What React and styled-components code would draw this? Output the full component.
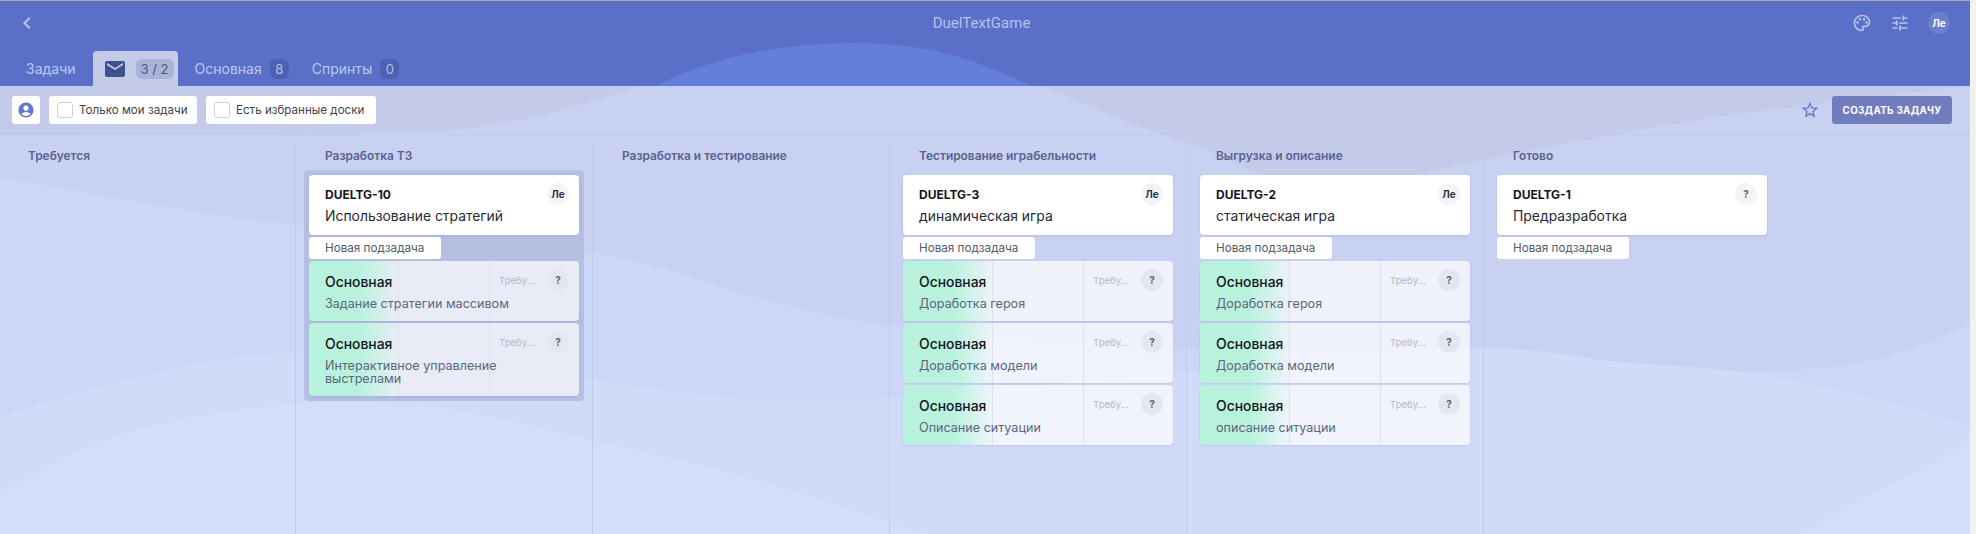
import React from "react";
import styled, { createGlobalStyle } from "styled-components";
import { MdAccountCircle, MdChevronLeft, MdMail, MdOutlinePalette, MdStarBorder, MdTune } from "react-icons/md";

const GlobalStyle = createGlobalStyle`
  html, body {
    margin: 0;
    height: 100%;
    overflow: hidden;
    background: #f1f1f1;
    font-family: Inter, "Liberation Sans", sans-serif;
  }
`;

const Page = styled.div`
  position: relative;
  width: 1970px;
  height: 534px;
  box-sizing: border-box;
  border-top: 1px solid #a9a9a9;
  overflow: hidden;
  background: linear-gradient(#5a6fc8 85px, #c4cbea 85px);
`;

const Waves = styled.svg`
  position: absolute;
  top: -1px;
  left: 0;
`;

const Content = styled.div`
  position: relative;
  display: flex;
  flex-direction: column;
  height: 100%;
`;

const Header = styled.header`
  height: 85px;
  flex: none;
  display: flex;
  flex-direction: column;
`;

const TopRow = styled.div`
  height: 50px;
  padding: 0 20px 6px 15px;
  box-sizing: border-box;
  display: flex;
  align-items: center;
  color: #b9c5ee;
`;

const Title = styled.div`
  flex: 1;
  padding-left: 72px;
  text-align: center;
  font-family: Roboto, sans-serif;
  font-size: 15px;
  color: #b5c1ec;
`;

const HeaderIcons = styled.div`
  display: flex;
  align-items: center;
  gap: 18px;
`;

const HeaderAvatar = styled.div`
  width: 22px;
  height: 22px;
  border-radius: 50%;
  background: #6b7fcf;
  color: #fff;
  font-size: 10px;
  font-weight: 700;
  display: flex;
  align-items: center;
  justify-content: center;
`;

const Tabs = styled.nav`
  height: 35px;
  padding-left: 26px;
  display: flex;
  align-items: center;
`;

const Tab = styled.div`
  display: flex;
  align-items: center;
  gap: 8px;
  font-size: 14px;
  color: #bcc8ef;
  margin-right: 23px;
`;

const ActiveTab = styled.div`
  width: 85px;
  height: 35px;
  margin: 0 17px 0 -6px;
  box-sizing: border-box;
  padding-left: 10px;
  display: flex;
  align-items: center;
  gap: 9px;
  background: #c3cbe9;
  border-radius: 4px 4px 0 0;
  color: #3e5090;
`;

const Count = styled.span`
  min-width: 19px;
  height: 20px;
  padding: 0 ${(p) => (p.$wide ? 5 : 0)}px;
  box-sizing: border-box;
  border-radius: 6px;
  font-size: 13px;
  line-height: 20px;
  text-align: center;
  background: ${(p) => (p.$wide ? "#aab3d5" : "#4e60b2")};
  color: ${(p) => (p.$wide ? "#4a5382" : "#b4c1ec")};
  white-space: nowrap;
`;

const Toolbar = styled.div`
  height: 49px;
  flex: none;
  box-sizing: border-box;
  padding: 10px 18px 10px 12px;
  border-bottom: 1px solid #bfc8ea;
  display: flex;
  align-items: flex-start;
  gap: 9px;
`;

const FilterButton = styled.div`
  width: ${(p) => p.$width}px;
  height: 28px;
  box-sizing: border-box;
  padding-left: 8px;
  background: #fff;
  border-radius: 3px;
  display: flex;
  align-items: center;
  gap: 6px;
  font-size: 11.6px;
  color: #444;
`;

const UserButton = styled(FilterButton)`
  padding: 0;
  justify-content: center;
  color: #5f7ac2;
`;

const CheckBox = styled.span`
  width: 16px;
  height: 16px;
  box-sizing: border-box;
  border: 1px solid #cfd0d6;
  border-radius: 3px;
`;

const StarButton = styled.div`
  margin-left: auto;
  margin-right: 3px;
  height: 28px;
  display: flex;
  align-items: center;
  color: #5f7ac2;
`;

const CreateButton = styled.div`
  width: 120px;
  height: 28px;
  background: #727dbd;
  border-radius: 3px;
  color: #fff;
  font-size: 9.8px;
  font-weight: 700;
  letter-spacing: 0.3px;
  display: flex;
  align-items: center;
  justify-content: center;
`;

const Board = styled.main`
  flex: 1;
  display: flex;
  min-height: 0;
`;

const Column = styled.section`
  width: 297px;
  flex: none;
  box-sizing: border-box;
  margin-top: 9px;
  border-right: 1px solid #bfc9ec;
  &:first-child {
    width: 296px;
  }
  &:last-child {
    border-right: none;
  }
`;

const ColumnTitle = styled.h3`
  margin: 0 0 2px;
  padding-left: 29px;
  font-size: 11.9px;
  font-weight: 600;
  line-height: 24px;
  color: #5a618f;
  ${Column}:first-child & {
    padding-left: 28px;
  }
`;

const Stack = styled.div`
  width: 280px;
  box-sizing: border-box;
  margin-left: 8px;
  padding: 5px;
  border-radius: 4px;
  display: flex;
  flex-direction: column;
  gap: 2px;
  background: ${(p) => (p.$selected ? "#b5bfe2" : "transparent")};
`;

const Card = styled.div`
  height: 60px;
  box-sizing: border-box;
  padding: 8px 10px 0 16px;
  background: #fff;
  border-radius: 4px;
  box-shadow: 0 1px 3px rgba(100, 110, 180, 0.2);
`;

const CardTop = styled.div`
  height: 22px;
  display: flex;
  align-items: center;
  justify-content: space-between;
`;

const TaskId = styled.span`
  font-size: 12px;
  font-weight: 700;
  color: #14141c;
`;

const CardTitle = styled.div`
  margin-top: 2px;
  font-size: 13.9px;
  line-height: 18px;
  color: #2a2a38;
`;

const Assignee = styled.span`
  width: 22px;
  height: 22px;
  flex: none;
  border-radius: 50%;
  background: ${(p) => (p.$sub ? "#e4e7f2" : "#f3f4f7")};
  color: ${(p) => (p.$me ? "#30303c" : "#5d6272")};
  font-size: 10px;
  font-weight: 700;
  display: flex;
  align-items: center;
  justify-content: center;
`;

const NewSubtask = styled.div`
  width: 132px;
  height: 22px;
  box-sizing: border-box;
  padding-left: 16px;
  background: #fff;
  border-radius: 3px;
  font-size: 11.7px;
  line-height: 22px;
  color: #565a66;
`;

const SubCard = styled.div`
  box-sizing: border-box;
  padding: 8px 10px 11px 16px;
  border-radius: 4px;
  background:
    linear-gradient(90deg, #b9f2dc 50px, rgba(185, 242, 220, 0) 90px),
    linear-gradient(#dde1ee, #dde1ee) 89px 0 / 1px 100% no-repeat,
    linear-gradient(#dde1ee, #dde1ee) 180px 0 / 1px 100% no-repeat,
    rgba(255, 255, 255, 0.7);
  box-shadow: 0 1px 2px rgba(100, 110, 180, 0.15);
`;

const SubName = styled.span`
  flex: 1;
  margin-top: 3px;
  font-size: 13.9px;
  font-weight: 500;
  color: #14141c;
`;

const Status = styled.span`
  width: 35px;
  margin-right: 13px;
  font-size: 9.6px;
  color: #b5b8c8;
  white-space: nowrap;
`;

const SubText = styled.div`
  margin-top: 6px;
  padding-right: 28px;
  font-size: 12.6px;
  line-height: 13px;
  color: #5b6680;
`;

const columns = [
  { title: "Требуется" },
  {
    title: "Разработка ТЗ",
    selected: true,
    task: { id: "DUELTG-10", name: "Использование стратегий", me: true },
    subs: ["Задание стратегии массивом", "Интерактивное управление выстрелами"],
  },
  { title: "Разработка и тестирование" },
  {
    title: "Тестирование играбельности",
    task: { id: "DUELTG-3", name: "динамическая игра", me: true },
    subs: ["Доработка героя", "Доработка модели", "Описание ситуации"],
  },
  {
    title: "Выгрузка и описание",
    task: { id: "DUELTG-2", name: "статическая игра", me: true },
    subs: ["Доработка героя", "Доработка модели", "описание ситуации"],
  },
  {
    title: "Готово",
    task: { id: "DUELTG-1", name: "Предразработка" },
    subs: [],
  },
];

// catmull-rom through the points, good enough for the soft background waves
function smooth(pts) {
  let d = `M${pts[0][0]} ${pts[0][1]}`;
  for (let i = 0; i < pts.length - 1; i++) {
    const p0 = pts[i - 1] || pts[i];
    const p1 = pts[i];
    const p2 = pts[i + 1];
    const p3 = pts[i + 2] || p2;
    const c1 = [p1[0] + (p2[0] - p0[0]) / 6, p1[1] + (p2[1] - p0[1]) / 6];
    const c2 = [p2[0] - (p3[0] - p1[0]) / 6, p2[1] - (p3[1] - p1[1]) / 6];
    d += `C${c1[0]} ${c1[1]} ${c2[0]} ${c2[1]} ${p2[0]} ${p2[1]}`;
  }
  return d;
}

const area = (pts) => `${smooth(pts)}L1970 534L0 534Z`;

const upperLeft = [[0, 134], [380, 133], [447, 131], [547, 114], [640, 86]];
const upperRight = [[1043, 86], [1120, 119], [1163, 134], [1203, 149], [1263, 174], [1340, 192], [1460, 165], [1700, 120], [1970, 86]];

function Background() {
  return (
    <Waves width="1970" height="534" viewBox="0 0 1970 534">
      <path d={`${smooth([[655, 86], [700, 67], [767, 50], [856, 43], [945, 53], [1034, 86]])}Z`} fill="#647fdb" />
      <path d={`${smooth(upperLeft)}L${smooth(upperRight).slice(1)}L1970 534L0 534Z`} fill="#c8d1f1" />
      <path d={area([[0, 177], [189, 210], [300, 225], [592, 253], [756, 297], [907, 328], [1200, 350], [1486, 347], [1618, 363], [1744, 372], [1870, 360], [1970, 325]])} fill="#ccd6f8" />
      <path d={area([[0, 418], [126, 380], [302, 353], [586, 380], [756, 400], [900, 397], [1186, 372], [1486, 350], [1618, 362], [1744, 372], [1860, 395], [1970, 425]])} fill="#d0daf9" />
      <path d={`${smooth([[0, 493], [126, 433], [302, 403], [441, 408], [592, 440], [756, 480], [926, 534]])}L0 534Z`} fill="#d4ddfc" />
      <path d={`${smooth([[1800, 534], [1880, 490], [1970, 443]])}L1970 534Z`} fill="#d4ddfc" />
    </Waves>
  );
}

function SubTask({ text }) {
  return (
    <SubCard>
      <CardTop>
        <SubName>Основная</SubName>
        <Status>Требу...</Status>
        <Assignee $sub>?</Assignee>
      </CardTop>
      <SubText>{text}</SubText>
    </SubCard>
  );
}

export default function App() {
  return (
    <>
      <GlobalStyle />
      <Page>
        <Background />
        <Content>
          <Header>
            <TopRow>
              <MdChevronLeft size={24} />
              <Title>DuelTextGame</Title>
              <HeaderIcons>
                <MdOutlinePalette size={20} />
                <MdTune size={20} />
                <HeaderAvatar>Ле</HeaderAvatar>
              </HeaderIcons>
            </TopRow>
            <Tabs>
              <Tab>Задачи</Tab>
              <ActiveTab>
                <MdMail size={24} />
                <Count $wide>3 / 2</Count>
              </ActiveTab>
              <Tab>
                Основная <Count>8</Count>
              </Tab>
              <Tab>
                Спринты <Count>0</Count>
              </Tab>
            </Tabs>
          </Header>
          <Toolbar>
            <UserButton $width={28}>
              <MdAccountCircle size={18} />
            </UserButton>
            <FilterButton $width={148}>
              <CheckBox />
              Только мои задачи
            </FilterButton>
            <FilterButton $width={170}>
              <CheckBox />
              Есть избранные доски
            </FilterButton>
            <StarButton>
              <MdStarBorder size={20} />
            </StarButton>
            <CreateButton>СОЗДАТЬ ЗАДАЧУ</CreateButton>
          </Toolbar>
          <Board>
            {columns.map((col) => (
              <Column key={col.title}>
                <ColumnTitle>{col.title}</ColumnTitle>
                {col.task && (
                  <Stack $selected={col.selected}>
                    <Card>
                      <CardTop>
                        <TaskId>{col.task.id}</TaskId>
                        <Assignee $me={col.task.me}>{col.task.me ? "Ле" : "?"}</Assignee>
                      </CardTop>
                      <CardTitle>{col.task.name}</CardTitle>
                    </Card>
                    <NewSubtask>Новая подзадача</NewSubtask>
                    {col.subs.map((text) => (
                      <SubTask key={text} text={text} />
                    ))}
                  </Stack>
                )}
              </Column>
            ))}
          </Board>
        </Content>
      </Page>
    </>
  );
}
